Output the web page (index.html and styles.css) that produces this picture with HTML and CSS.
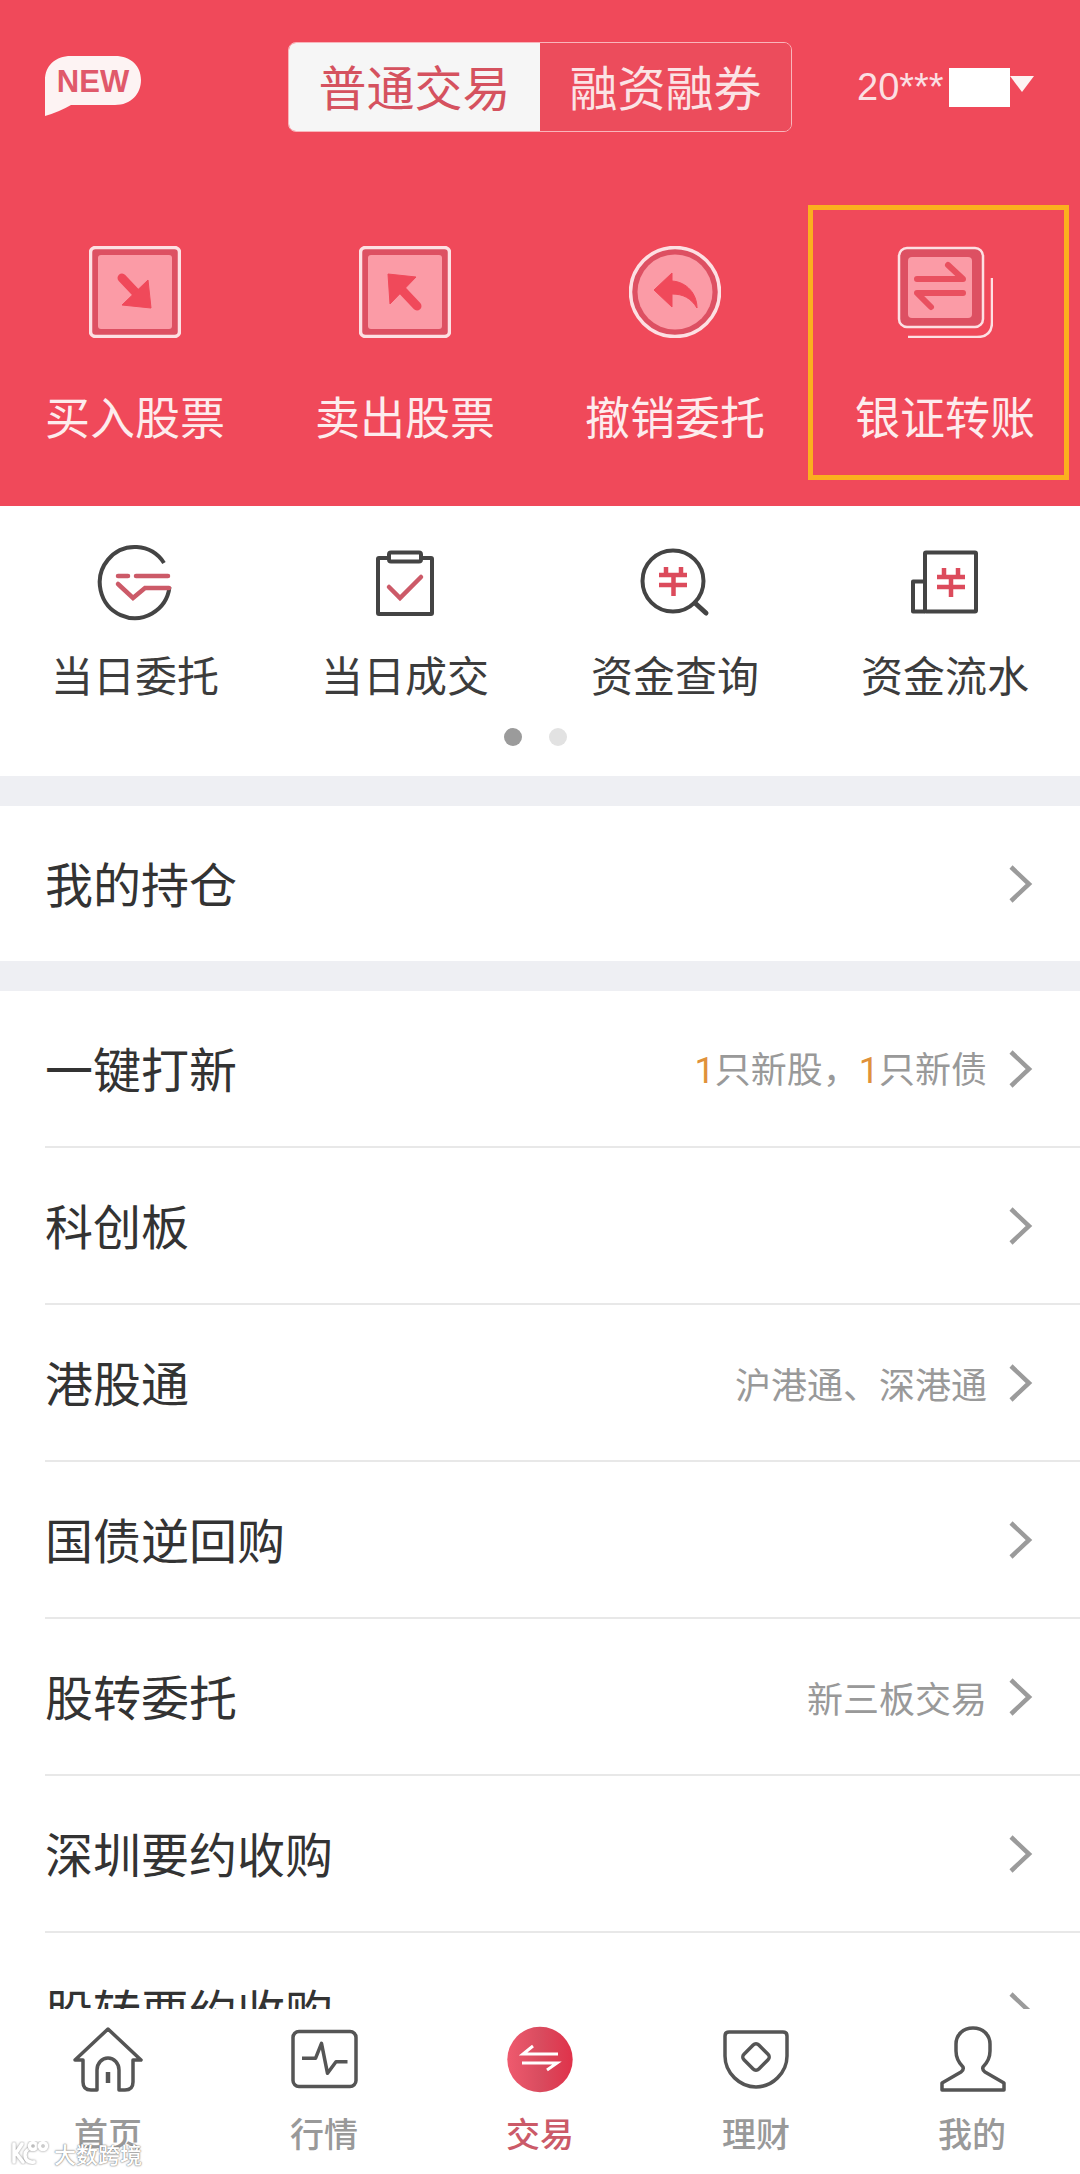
FILE: index.html
```html
<!DOCTYPE html>
<html lang="zh-CN">
<head>
<meta charset="utf-8">
<title>交易</title>
<link rel="stylesheet" href="styles.css">
</head>
<body>
<div class="page">

	<div class="header">
		<div class="header_top">
			<svg class="new_badge" viewBox="0 0 96 60" width="96" height="60">
				<path class="badge_shape" d="M26 0H70C86 0 96 10 96 24C96 38 86 49 70 49H26Q14 56 0 60V24C0 10 10 0 26 0Z"/>
				<text class="badge_text" x="48" y="36" text-anchor="middle">NEW</text>
			</svg>
			<div class="mode_tabs">
				<div class="mode_tab mode_tab_on">普通交易</div>
				<div class="mode_tab">融资融券</div>
			</div>
			<div class="account">
				<span class="account_no">20***</span>
				<span class="account_mask"></span>
				<span class="account_arrow"></span>
			</div>
		</div>

		<div class="quick_row">
			<div class="quick_item">
				<svg class="quick_icon" viewBox="0 0 92 92" width="92" height="92">
					<rect class="ic_frame" x="1.5" y="1.5" width="89" height="89" rx="5"/>
					<rect class="ic_pad" x="9" y="9" width="74" height="74" rx="3"/>
					<path class="ic_red_line" d="M33 32L50 50"/>
					<path class="ic_red_fill" d="M59 34L62 62L33 59Z"/>
				</svg>
				<div class="quick_label">买入股票</div>
			</div>
			<div class="quick_item">
				<svg class="quick_icon" viewBox="0 0 92 92" width="92" height="92">
					<rect class="ic_frame" x="1.5" y="1.5" width="89" height="89" rx="5"/>
					<rect class="ic_pad" x="9" y="9" width="74" height="74" rx="3"/>
					<path class="ic_red_line" d="M58 60L42 43"/>
					<path class="ic_red_fill" d="M29 28L57 31L31 58Z"/>
				</svg>
				<div class="quick_label">卖出股票</div>
			</div>
			<div class="quick_item">
				<svg class="quick_icon" viewBox="0 0 92 92" width="92" height="92">
					<circle class="ic_frame" cx="46" cy="46" r="44.5"/>
					<circle class="ic_pad" cx="46" cy="46" r="37.5"/>
					<path class="ic_red_fill" d="M25 44L43 27V35C58 36 68 48 68 62C62 52 54 48 43 48V61Z"/>
				</svg>
				<div class="quick_label">撤销委托</div>
			</div>
			<div class="quick_item quick_item_marked">
				<svg class="quick_icon" viewBox="0 0 96 92" width="96" height="92">
					<path class="ic_back" d="M11 91H80Q95 91 95 76V32"/>
					<rect class="ic_frame_thin" x="2" y="2" width="84" height="79" rx="8"/>
					<rect class="ic_pad" x="11" y="11" width="64" height="61" rx="4"/>
					<path class="ic_red_thin" d="M20 33H66L51 19M66 47H20L34 61"/>
				</svg>
				<div class="quick_label">银证转账</div>
			</div>
		</div>
	</div>

	<div class="shortcuts">
		<div class="shortcut_row">
			<div class="shortcut_item">
				<svg class="shortcut_icon" viewBox="0 0 80 80" width="80" height="80">
					<path class="ic_dark" d="M69 18A35 35.5 0 1 0 74.5 42"/>
					<path class="ic_rose" d="M23 31H33M41 31H73M23 39L38 53L50 43H74"/>
				</svg>
				<div class="shortcut_label">当日委托</div>
			</div>
			<div class="shortcut_item">
				<svg class="shortcut_icon" viewBox="0 0 80 80" width="80" height="80">
					<rect class="ic_dark" x="13" y="13" width="54" height="56" rx="1"/>
					<rect class="ic_dark ic_white" x="24" y="7.5" width="32" height="9" rx="2"/>
					<path class="ic_rose" d="M24 42L35 53L56 32"/>
				</svg>
				<div class="shortcut_label">当日成交</div>
			</div>
			<div class="shortcut_item">
				<svg class="shortcut_icon" viewBox="0 0 80 80" width="80" height="80">
					<circle class="ic_dark" cx="38" cy="36" r="30.5"/>
					<path class="ic_dark ic_round" d="M60 58L71 68"/>
					<path class="ic_yen" d="M24 30H52M24 40H52M38.5 30V51M31 22V30M46 22V30"/>
				</svg>
				<div class="shortcut_label">资金查询</div>
			</div>
			<div class="shortcut_item">
				<svg class="shortcut_icon" viewBox="0 0 80 80" width="80" height="80">
					<rect class="ic_dark" x="20" y="7.5" width="51" height="59" rx="1"/>
					<path class="ic_dark" d="M20 36.5H8V66.5H20"/>
					<path class="ic_yen" d="M32 32H60M32 42H60M46 32V52M39 23V32M53 23V32"/>
				</svg>
				<div class="shortcut_label">资金流水</div>
			</div>
		</div>
		<div class="dots">
			<span class="dot dot_on"></span>
			<span class="dot"></span>
		</div>
	</div>

	<div class="list_area">
		<div class="list_group">
			<div class="list_row">
				<span class="row_name">我的持仓</span>
				<svg class="chevron" viewBox="0 0 26 40" width="26" height="40"><path d="M4 3L22 20L4 37"/></svg>
			</div>
		</div>
		<div class="list_group">
			<div class="list_row">
				<span class="row_name">一键打新</span>
				<span class="row_note"><b>1</b>只新股&#xFF0C;<b>1</b>只新债</span>
				<svg class="chevron" viewBox="0 0 26 40" width="26" height="40"><path d="M4 3L22 20L4 37"/></svg>
			</div>
			<div class="list_row">
				<span class="row_name">科创板</span>
				<svg class="chevron" viewBox="0 0 26 40" width="26" height="40"><path d="M4 3L22 20L4 37"/></svg>
			</div>
			<div class="list_row">
				<span class="row_name">港股通</span>
				<span class="row_note">沪港通、深港通</span>
				<svg class="chevron" viewBox="0 0 26 40" width="26" height="40"><path d="M4 3L22 20L4 37"/></svg>
			</div>
			<div class="list_row">
				<span class="row_name">国债逆回购</span>
				<svg class="chevron" viewBox="0 0 26 40" width="26" height="40"><path d="M4 3L22 20L4 37"/></svg>
			</div>
			<div class="list_row">
				<span class="row_name">股转委托</span>
				<span class="row_note">新三板交易</span>
				<svg class="chevron" viewBox="0 0 26 40" width="26" height="40"><path d="M4 3L22 20L4 37"/></svg>
			</div>
			<div class="list_row">
				<span class="row_name">深圳要约收购</span>
				<svg class="chevron" viewBox="0 0 26 40" width="26" height="40"><path d="M4 3L22 20L4 37"/></svg>
			</div>
			<div class="list_row">
				<span class="row_name">股转要约收购</span>
				<svg class="chevron" viewBox="0 0 26 40" width="26" height="40"><path d="M4 3L22 20L4 37"/></svg>
			</div>
		</div>
	</div>

	<div class="tabbar">
		<div class="tab">
			<svg class="tab_icon" viewBox="0 0 72 72" width="72" height="72">
				<path class="ic_tab" d="M36 3L69 34H61V56Q61 64 53 64H47V44A11 12 0 0 0 25 44V64H19Q11 64 11 56V34H3Z"/>
				<path class="ic_tab ic_tab_thick" d="M36 46V57"/>
			</svg>
			<div class="tab_label">首页</div>
		</div>
		<div class="tab">
			<svg class="tab_icon" viewBox="0 0 72 72" width="72" height="72">
				<rect class="ic_tab" x="5" y="5.5" width="63" height="55" rx="6"/>
				<path class="ic_tab" d="M14 32.3H27.5L33.5 17.3L39.5 47.3L48 35.7H59.5"/>
			</svg>
			<div class="tab_label">行情</div>
		</div>
		<div class="tab tab_on">
			<svg class="tab_icon" viewBox="0 0 72 72" width="72" height="72">
				<defs>
					<linearGradient id="tradeFill" x1="0" y1="0" x2="1" y2="0">
						<stop offset="0" stop-color="#ef5a6e"/>
						<stop offset="0.5" stop-color="#d94c5f"/>
						<stop offset="1" stop-color="#e0324a"/>
					</linearGradient>
				</defs>
				<circle cx="36" cy="33.5" r="32.7" fill="url(#tradeFill)"/>
				<path class="ic_tab_white" d="M29 20L19 28H54M18 37H53L43 44"/>
			</svg>
			<div class="tab_label">交易</div>
		</div>
		<div class="tab">
			<svg class="tab_icon" viewBox="0 0 72 72" width="72" height="72">
				<path class="ic_tab" d="M5 10Q5 6 9 6H63Q67 6 67 10V30C67 47 52 61 36 61C20 61 5 47 5 30Z"/>
				<rect class="ic_tab" x="25.5" y="20.5" width="21" height="21" rx="4" transform="rotate(45 36 31)"/>
			</svg>
			<div class="tab_label">理财</div>
		</div>
		<div class="tab">
			<svg class="tab_icon" viewBox="0 0 72 72" width="72" height="72">
				<path class="ic_tab" d="M37 2C27 2 20 9 20 18V25C20 32 23 37 27 41Q28 44 25 46L6 57V64H68V57L49 46Q46 44 47 41C51 37 54 32 54 25V18C54 9 47 2 37 2Z"/>
			</svg>
			<div class="tab_label">我的</div>
		</div>
	</div>

	<div class="watermark">
		<svg class="watermark_logo" viewBox="0 0 40 24" width="40" height="24">
			<path d="M4 3V21M12 3L6 12L13 21M24 7C18 7 15 10 15 14C15 19 19 22 24 21"/>
			<circle cx="23" cy="5" r="3.5"/>
			<circle cx="33" cy="5" r="3.5"/>
		</svg>
		<span class="watermark_text">大数跨境</span>
	</div>

</div>
</body>
</html>
```

FILE: styles.css
```css
* { box-sizing: border-box; }
html, body { margin: 0; padding: 0; background-color: #fff; }
body { font-family: "Noto Sans CJK SC", "Noto Sans", sans-serif; color: #333; }

.page { position: relative; width: 1080px; height: 2174px; display: flex; flex-direction: column; overflow: hidden; }

/* red header */
.header { height: 506px; flex: none; background-color: #f0495a; padding-top: 42px; }
.header_top { display: flex; align-items: center; height: 90px; padding-left: 45px; }
.new_badge { margin-right: 147px; margin-top: -2px; flex: none; }
.badge_shape { fill: #fdf3f3; }
.badge_text { fill: #e0596a; font-family: "Liberation Sans", sans-serif; font-weight: bold; font-size: 31px; }

.mode_tabs { display: flex; width: 504px; height: 90px; border: 1px solid #f9b5bb; border-radius: 8px; overflow: hidden; }
.mode_tab { flex: 1; display: flex; align-items: center; justify-content: center; padding-bottom: 4px; font-size: 48px; line-height: 1; color: #fbe3e5; background-color: #ec4c5c; }
.mode_tab_on { color: #d5525f; background-color: #f6f6f6; }

.account { display: flex; align-items: center; margin-left: 65px; color: #fbdfe2; }
.account_no { font-family: "Liberation Sans", sans-serif; font-size: 38px; width: 92px; white-space: nowrap; }
.account_mask { width: 61px; height: 39px; background-color: #fff; }
.account_arrow { width: 0; height: 0; border-left: 12px solid transparent; border-right: 12px solid transparent; border-top: 16px solid #fdf3f3; margin-top: -6px; }

.quick_row { display: grid; grid-template-columns: repeat(4, 270px); margin-top: 114px; }
.quick_item { position: relative; display: flex; flex-direction: column; align-items: center; }
.quick_item_marked::after { content: ""; box-sizing: border-box; position: absolute; left: -2px; top: -41px; width: 261px; height: 275px; border: 5px solid #fbb01f; }
.quick_icon { display: block; }
.quick_label { margin-top: 48px; font-size: 45px; line-height: 60px; color: #fdeced; }

.ic_frame { fill: #dd5062; stroke: #fde0e3; stroke-width: 3.5; }
.ic_frame_thin { fill: #dd5062; stroke: #fde0e3; stroke-width: 2.5; }
.ic_back { fill: none; stroke: #fde0e3; stroke-width: 2.5; }
.ic_pad { fill: #fb9ba6; }
.ic_red_fill { fill: #f0495a; stroke: #f0495a; stroke-width: 1; stroke-linejoin: round; }
.ic_red_line { fill: none; stroke: #f0495a; stroke-width: 9; stroke-linecap: round; }
.ic_red_thin { fill: none; stroke: #e9505f; stroke-width: 6; stroke-linecap: round; stroke-linejoin: round; }

/* white shortcut row */
.shortcuts { height: 270px; flex: none; padding-top: 39px; background-color: #fff; }
.shortcut_row { display: grid; grid-template-columns: repeat(4, 270px); }
.shortcut_item { display: flex; flex-direction: column; align-items: center; }
.shortcut_icon { display: block; }
.shortcut_label { margin-top: 19px; font-size: 42px; line-height: 60px; color: #3c3c3c; }

.ic_dark { fill: none; stroke: #444; stroke-width: 4; stroke-linejoin: round; }
.ic_white { fill: #fff; }
.ic_round { stroke-linecap: round; stroke-width: 5; }
.ic_rose { fill: none; stroke: #cc5a68; stroke-width: 4.5; stroke-linecap: round; }
.ic_yen { fill: none; stroke: #dc4b5c; stroke-width: 4.5; }

.dots { display: flex; justify-content: center; gap: 27px; margin: 24px 9px 0 0; }
.dot { width: 18px; height: 18px; border-radius: 50%; background-color: #e2e2e2; }
.dot_on { background-color: #9b9b9b; }

/* list */
.list_area { flex: 1; min-height: 0; overflow: hidden; background-color: #eeeff3; }
.list_group { margin-top: 30px; padding-left: 45px; background-color: #fff; }
.list_row { display: flex; align-items: center; height: 157px; padding-right: 47px; border-bottom: 2px solid #e8e8e8; }
.list_group:first-child .list_row { height: 155px; border-bottom: 0; }
.row_name { flex: 1; margin-top: -3px; font-size: 48px; line-height: 60px; color: #333; white-space: nowrap; }
.row_note { margin-right: 20px; font-size: 36px; line-height: 50px; color: #999; white-space: nowrap; }
.row_note b { font-family: "Roboto", sans-serif; font-weight: 400; color: #e0913a; }
.chevron { flex: none; }
.chevron path { fill: none; stroke: #9b9b9b; stroke-width: 4.5; }

/* bottom tabs */
.tabbar { height: 165px; flex: none; display: grid; grid-template-columns: repeat(5, 216px); padding-top: 17px; background-color: #fff; }
.tab { display: flex; flex-direction: column; align-items: center; }
.tab_icon { display: block; }
.tab_label { margin-top: 10px; font-size: 34px; line-height: 50px; font-weight: 500; color: #999; }
.tab_on .tab_label { color: #cb5a68; }

.ic_tab { fill: none; stroke: #555; stroke-width: 3.5; stroke-linejoin: round; }
.ic_tab_thick { stroke-width: 4.5; }
.ic_tab_white { fill: none; stroke: #fff; stroke-width: 3; }

/* watermark over the first tab */
.watermark { position: absolute; left: 10px; bottom: 8px; display: flex; align-items: center; gap: 4px; color: #fff; }
.watermark_logo { display: block; }
.watermark_logo path, .watermark_logo circle { fill: none; stroke: #fff; stroke-width: 3.5; stroke-linecap: round; filter: drop-shadow(0 0 1px #888); }
.watermark_text { font-size: 22px; line-height: 26px; font-weight: 500; text-shadow: 0 0 2px #777, 0 0 1px #777; }
```
